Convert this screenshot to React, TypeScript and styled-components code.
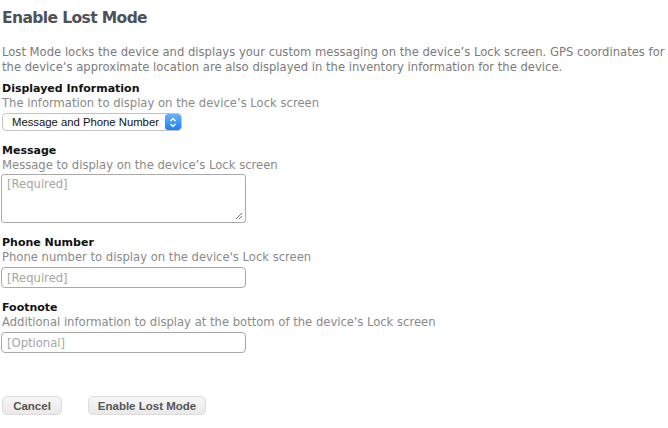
import React from "react";
import styled, { createGlobalStyle } from "styled-components";

const Global = createGlobalStyle`
  html, body { margin: 0; padding: 0; background: #fff; }
  body { font-family: "DejaVu Sans", Verdana, sans-serif; }
`;

const Page = styled.div`
  width: 668px;
  height: 428px;
  padding: 0 2px;
  box-sizing: border-box;
  display: flex;
  flex-direction: column;
`;

const Title = styled.h1`
  margin: 8px 0 0 0;
  font-size: 15.5px;
  letter-spacing: -0.6px;
  line-height: 20px;
  font-weight: bold;
  color: #4e5257;
`;

const Intro = styled.p`
  margin: 17px 0 0 0;
  font-size: 11.6px;
  line-height: 15px;
  color: #7b7b7b;
  white-space: nowrap;
`;

const Field = styled.div<{ $top: number }>`
  display: flex;
  flex-direction: column;
  align-items: flex-start;
  margin-top: ${(p) => p.$top}px;
`;

const Label = styled.div`
  font-size: 11px;
  font-weight: bold;
  color: #111;
  line-height: 15px;
`;

const Hint = styled.div`
  font-size: 11.6px;
  line-height: 15px;
  color: #8a8a8a;
`;

const SelectBox = styled.div`
  margin-top: 2px;
  height: 18px;
  width: 180px;
  box-sizing: border-box;
  border: 1px solid #c3c3c3;
  border-radius: 4px;
  display: flex;
  align-items: center;
  justify-content: space-between;
  font-family: "Liberation Sans", Arial, sans-serif;
  font-size: 11.3px;
  color: #111;
  padding-left: 9px;
  background: #fff;
  overflow: hidden;
`;

const Stepper = styled.div`
  width: 16px;
  height: 16px;
  border-radius: 3px;
  background: linear-gradient(#6cb3fa, #1a7ff2);
  display: flex;
  align-items: center;
  justify-content: center;
`;

const TextArea = styled.div`
  margin-top: 1px;
  margin-left: -1px;
  width: 245px;
  height: 49px;
  box-sizing: border-box;
  border: 1px solid #a9a9a9;
  border-radius: 3px;
  padding: 2px 5px;
  font-size: 11.6px;
  color: #a6a6a6;
  position: relative;
`;

const Grip = styled.svg`
  position: absolute;
  right: 2px;
  bottom: 2px;
`;

const Input = styled.div`
  margin-top: 2px;
  margin-left: -1px;
  width: 245px;
  height: 21px;
  box-sizing: border-box;
  border: 1px solid #a9a9a9;
  border-radius: 4px;
  padding: 0 5px;
  display: flex;
  align-items: center;
  font-size: 11.6px;
  color: #a6a6a6;
`;

const Buttons = styled.div`
  display: flex;
  gap: 26px;
  margin-top: 43px;
`;

const Button = styled.button<{ $w: number }>`
  width: ${(p) => p.$w}px;
  height: 19px;
  box-sizing: border-box;
  border: 1px solid #dcdcdc;
  border-radius: 5px;
  background: linear-gradient(#f6f6f6, #e9e9e9);
  font-family: "Liberation Sans", Arial, sans-serif;
  font-weight: bold;
  font-size: 11.5px;
  color: #555;
  padding: 0;
  display: flex;
  align-items: center;
  justify-content: center;
`;

export default function App() {
  return (
    <>
      <Global />
      <Page>
        <Title>Enable Lost Mode</Title>
        <Intro>
          Lost Mode locks the device and displays your custom messaging on the device’s Lock screen. GPS coordinates for
          <br />
          the device’s approximate location are also displayed in the inventory information for the device.
        </Intro>
        <Field $top={6}>
          <Label>Displayed Information</Label>
          <Hint>The information to display on the device’s Lock screen</Hint>
          <SelectBox>
            <span>Message and Phone Number</span>
            <Stepper>
              <svg width="8" height="11" viewBox="0 0 8 11">
                <path d="M1.5 4 L4 1.5 L6.5 4 M1.5 7 L4 9.5 L6.5 7" fill="none" stroke="#fff" strokeWidth="1.4" />
              </svg>
            </Stepper>
          </SelectBox>
        </Field>
        <Field $top={12}>
          <Label>Message</Label>
          <Hint>Message to display on the device’s Lock screen</Hint>
          <TextArea>
            [Required]
            <Grip width="8" height="8" viewBox="0 0 8 8">
              <path d="M7 1 L1 7 M7 4 L4 7" stroke="#777" strokeWidth="1" />
            </Grip>
          </TextArea>
        </Field>
        <Field $top={12}>
          <Label>Phone Number</Label>
          <Hint>Phone number to display on the device's Lock screen</Hint>
          <Input>[Required]</Input>
        </Field>
        <Field $top={12}>
          <Label>Footnote</Label>
          <Hint>Additional information to display at the bottom of the device's Lock screen</Hint>
          <Input>[Optional]</Input>
        </Field>
        <Buttons>
          <Button $w={60}>Cancel</Button>
          <Button $w={118}>Enable Lost Mode</Button>
        </Buttons>
      </Page>
    </>
  );
}
